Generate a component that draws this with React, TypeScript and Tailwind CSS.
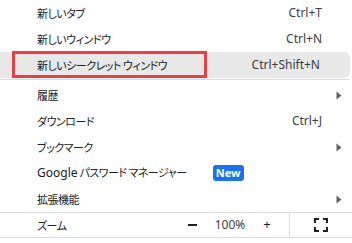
import React from "react";

type Item = {
  label: string;
  prefix?: string;
  shortcut?: string;
  arrow?: boolean;
  badge?: string;
  active?: boolean;
};

const groupA: Item[] = [
  { label: "新しいタブ", shortcut: "Ctrl+T" },
  { label: "新しいウィンドウ", shortcut: "Ctrl+N" },
  { label: "新しいシークレット ウィンドウ", shortcut: "Ctrl+Shift+N", active: true },
];

const groupB: Item[] = [
  { label: "履歴", arrow: true },
  { label: "ダウンロード", shortcut: "Ctrl+J" },
  { label: "ブックマーク", arrow: true },
  { prefix: "Google", label: " パスワード マネージャー", badge: "New" },
  { label: "拡張機能", arrow: true },
];

function Arrow() {
  return (
    <svg width="6" height="9" viewBox="0 0 6 9" className="text-[#5f6368]">
      <path d="M0.5 0.5 L5.5 4.5 L0.5 8.5 Z" fill="currentColor" />
    </svg>
  );
}

function Row({ item }: { item: Item }) {
  return (
    <div
      className={`flex h-[26px] items-center pl-[37px] ${
        item.active ? "mr-[2px] rounded-r-[6px] bg-[#e8e8e9]" : ""
      } ${item.arrow ? "pr-[10px]" : "pr-[30px]"}`}
    >
      <span className="text-[11px] tracking-[-0.5px] text-[#202124]">
        {item.prefix && (
          <span className="font-['Noto_Sans',sans-serif] text-[12px] tracking-normal">{item.prefix}</span>
        )}
        {item.label}
      </span>
      {item.badge && (
        <span className="ml-[26px] flex h-[16px] w-[31px] items-center justify-center rounded-[3px] bg-[#1a73e8] font-['Noto_Sans',sans-serif] text-[11px] font-bold text-white">
          {item.badge}
        </span>
      )}
      <span className="flex-1" />
      {item.shortcut && (
        <span className="font-['Noto_Sans',sans-serif] text-[12px] text-[#3c4043]">
          {item.shortcut}
        </span>
      )}
      {item.arrow && <Arrow />}
    </div>
  );
}

function FullscreenIcon() {
  return (
    <svg width="14" height="14" viewBox="0 0 14 14" fill="none" stroke="#202124" strokeWidth="2">
      <path d="M1 5 V1 H5" />
      <path d="M9 1 H13 V5" />
      <path d="M13 9 V13 H9" />
      <path d="M5 13 H1 V9" />
    </svg>
  );
}

export default function App() {
  return (
    <div className="relative h-[243px] w-[352px] overflow-hidden bg-white font-['Noto_Sans_CJK_JP','Noto_Sans',sans-serif] [font-feature-settings:'palt']">
      <div>
        {groupA.map((it) => (
          <Row key={it.label} item={it} />
        ))}
      </div>
      <div className="my-[1px] mr-[2px] h-px bg-[#dadce0]" />
      <div className="pt-[1px]">
        {groupB.map((it) => (
          <Row key={it.label} item={it} />
        ))}
      </div>
      <div className="flex h-[26px] items-stretch border-y border-[#dadce0]">
        <div className="flex flex-1 items-center pl-[37px]">
          <span className="text-[11px] tracking-[-0.5px] text-[#202124]">ズーム</span>
        </div>
        <div className="flex w-[24px] items-center justify-center">
          <span className="block h-[1.5px] w-[9px] bg-[#202124]" />
        </div>
        <div className="flex w-[52px] items-center justify-center font-['Noto_Sans',sans-serif] text-[12px] text-[#3c4043]">
          100%
        </div>
        <div className="flex w-[22px] items-center justify-center font-['Noto_Sans',sans-serif] text-[13px] text-[#202124]">
          +
        </div>
        <div className="w-[11px]" />
        <div className="w-px bg-[#dadce0]" />
        <div className="flex w-[62px] items-center justify-center">
          <FullscreenIcon />
        </div>
      </div>
      <div className="pointer-events-none absolute left-[12px] top-[51px] h-[27px] w-[195px] border-[3px] border-[#ef3e42]" />
    </div>
  );
}
